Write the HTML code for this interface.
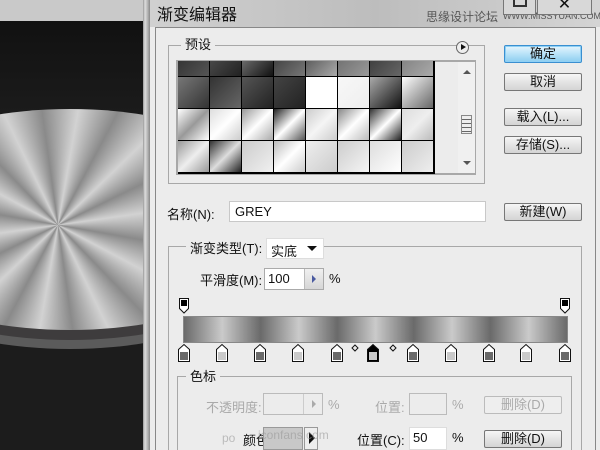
<!DOCTYPE html>
<html><head><meta charset="utf-8"><style>
*{margin:0;padding:0;box-sizing:border-box}
html{width:600px;height:450px;overflow:hidden}
body{width:600px;height:450px;overflow:hidden;position:relative;background:#ececec;font-family:"Liberation Sans","Noto Sans CJK SC",sans-serif;font-size:13px;color:#111}
.a{position:absolute}
.btn{position:absolute;width:78px;height:18px;border:1px solid #777;border-radius:2px;background:linear-gradient(#f6f6f6,#e4e4e4 50%,#d4d4d4);text-align:center;font-size:13px;line-height:16px;color:#111}
.fs{position:absolute;border:1px solid #a8a8a8}
.lg{position:absolute;background:#ececec;padding:0 4px;line-height:16px}
.cell{position:absolute;width:31px;height:31px}
.inp{position:absolute;background:#fff;border:1px solid #c8c8c8}
</style></head><body>
<div class="a" style="left:0;top:0;width:143px;height:450px;background:#1c1c1c;overflow:hidden">
 <div class="a" style="left:0;top:0;width:143px;height:21px;background:#c9c9c9"></div>
 <div class="a" style="left:0;top:21px;width:143px;height:100px;background:linear-gradient(#111,#1c1c1c)"></div>
 <div class="a" style="left:-160px;top:129px;width:460px;height:220px;border-radius:50%;background:#5b5b5b"></div>
 <div class="a" style="left:-160px;top:118px;width:460px;height:222px;border-radius:50%;background:#3e3c3d"></div>
 <div class="a" style="left:-160px;top:109px;width:460px;height:221px;border-radius:50%;background:repeating-conic-gradient(from 10deg at 218px 116px,#d2d2d2 0deg,#8a8a8a 18deg,#d2d2d2 36deg)"></div>
</div>
<div class="a" style="left:143px;top:0;width:7px;height:450px;background:linear-gradient(90deg,#999,#ddd 30%,#bbb 60%,#888)"></div>
<div class="a" style="left:150px;top:0;width:450px;height:27px;background:linear-gradient(90deg,#d0d0d0,#bdbdbd 50%,#d4d4d4)"></div>
<div class="a" style="left:157px;top:1px;font-size:16px;color:#111">渐变编辑器</div>
<div class="a" style="left:426px;top:8px;font-size:12px;color:#555">思缘设计论坛</div>
<div class="a" style="left:503px;top:11px;font-size:9px;color:#555">WWW.MISSYUAN.COM</div>
<div class="a" style="left:503px;top:0;width:33px;height:15px;border:1px solid #777;border-top:0;background:#d8d8d8"></div>
<div class="a" style="left:537px;top:0;width:55px;height:15px;border:1px solid #777;border-top:0;background:#d8d8d8;text-align:center;font-size:16px;line-height:10px">✕</div>
<div class="a" style="left:513px;top:0;width:14px;height:7px;border:2px solid #333;border-top:0"></div>
<div class="a" style="left:155px;top:27px;width:441px;height:423px;background:#ececec;border:1px solid #888;border-bottom:0"></div>
<div class="fs" style="left:168px;top:45px;width:317px;height:139px"></div>
<div class="lg" style="left:181px;top:37px">预设</div>
<div class="a" style="left:456px;top:41px;width:13px;height:13px;border-radius:50%;background:#eee;border:1px solid #666"></div>
<div class="a" style="left:461px;top:44px;width:0;height:0;border-left:5px solid #111;border-top:3.5px solid transparent;border-bottom:3.5px solid transparent"></div>
<div class="a" style="left:176px;top:60px;width:300px;height:115px;border:2px solid #a8a8a8;background:#ececec"></div>
<div class="a" style="left:458px;top:62px;width:17px;height:111px;background:#f0f0f0"></div>
<div class="a" style="left:463px;top:70px;border-left:4px solid transparent;border-right:4px solid transparent;border-bottom:4px solid #555"></div>
<div class="a" style="left:463px;top:161px;border-left:4px solid transparent;border-right:4px solid transparent;border-top:4px solid #555"></div>
<div class="a" style="left:461px;top:115px;width:11px;height:19px;border:1px solid #888;background:repeating-linear-gradient(#eee 0 3px,#666 3px 4px)"></div>
<div class="a" style="left:178px;top:61px;width:257px;height:113px;background:#000;overflow:hidden" id="g"></div>
<div class="btn" style="left:504px;top:45px;border-color:#3a8fd0;background:linear-gradient(#e6f5fd,#b8e2f8 50%,#8ccdf0);box-shadow:0 0 0 1px #8fd0f5 inset">确定</div>
<div class="btn" style="left:504px;top:73px">取消</div>
<div class="btn" style="left:504px;top:108px">载入(L)...</div>
<div class="btn" style="left:504px;top:136px">存储(S)...</div>
<div class="btn" style="left:504px;top:203px">新建(W)</div>
<div class="a" style="left:167px;top:204px">名称(N):</div>
<div class="inp" style="left:229px;top:201px;width:257px;height:21px"></div>
<div class="a" style="left:235px;top:204px">GREY</div>
<div class="fs" style="left:168px;top:246px;width:414px;height:204px;border-bottom:0"></div>
<div class="lg" style="left:186px;top:241px">渐变类型(T):</div>
<div class="inp" style="left:266px;top:238px;width:58px;height:21px;border-color:#ddd"></div>
<div class="a" style="left:271px;top:241px">实底</div>
<div class="a" style="left:307px;top:246px;border-left:5px solid transparent;border-right:5px solid transparent;border-top:5px solid #111"></div>
<div class="a" style="left:200px;top:270px">平滑度(M):</div>
<div class="inp" style="left:264px;top:268px;width:60px;height:22px;border-color:#aaa"></div>
<div class="a" style="left:304px;top:269px;width:19px;height:20px;background:linear-gradient(#f0f0f0,#d6d6d6);border-left:1px solid #bbb"></div>
<div class="a" style="left:312px;top:275px;border-left:4px solid #4a5aa0;border-top:4px solid transparent;border-bottom:4px solid transparent"></div>
<div class="a" style="left:268px;top:271px">100</div>
<div class="a" style="left:329px;top:271px">%</div>
<svg class="a" style="left:0;top:0" width="600" height="450">
 <g fill="#fff" stroke="#111" stroke-width="1">
  <path d="M179.5 298.5h9v10l-4.5 4.5-4.5-4.5z"/><path d="M560.5 298.5h9v10l-4.5 4.5-4.5-4.5z"/>
 </g>
 <rect x="181" y="300" width="6" height="6" fill="#000"/><rect x="562" y="300" width="6" height="6" fill="#000"/>
 <g stroke="#111" fill="none"><path d="M355 345l3 3-3 3-3-3z"/><path d="M393 345l3 3-3 3-3-3z"/></g>
</svg>
<div class="a" style="left:183px;top:316px;width:385px;height:27px;border:1px solid #888;background:linear-gradient(90deg,#6a6a6a 0%,#cacaca 10%,#6a6a6a 20%,#cacaca 30%,#6a6a6a 40%,#cacaca 50%,#6a6a6a 60%,#cacaca 70%,#6a6a6a 80%,#cacaca 90%,#6a6a6a 100%)"></div>
<svg class="a" style="left:0;top:0" width="600" height="450" id="bs"></svg>
<div class="fs" style="left:177px;top:376px;width:395px;height:74px;border-bottom:0"></div>
<div class="lg" style="left:186px;top:369px">色标</div>
<div class="a" style="left:206px;top:397px;color:#aaa">不透明度:</div>
<div class="inp" style="left:263px;top:393px;width:60px;height:22px;border-color:#bbb;background:#ececec"></div>
<div class="a" style="left:303px;top:394px;width:20px;height:20px;border-left:1px solid #ccc"></div>
<div class="a" style="left:312px;top:400px;border-left:4px solid #aaa;border-top:4px solid transparent;border-bottom:4px solid transparent"></div>
<div class="a" style="left:328px;top:397px;color:#aaa">%</div>
<div class="a" style="left:375px;top:397px;color:#aaa">位置:</div>
<div class="inp" style="left:409px;top:393px;width:38px;height:22px;border-color:#bbb;background:#ececec"></div>
<div class="a" style="left:452px;top:397px;color:#aaa">%</div>
<div class="btn" style="left:484px;top:396px;color:#aaa;border-color:#bbb;background:#eee">删除(D)</div>
<div class="a" style="left:222px;top:431px;color:#bbb;font-size:12px">po</div>
<div class="a" style="left:243px;top:430px">颜色:</div>
<div class="a" style="left:263px;top:427px;width:40px;height:23px;background:#c8c8c8;border:1px solid #999"></div>
<div class="a" style="left:304px;top:427px;width:14px;height:23px;border:1px solid #999;background:#eee"></div>
<div class="a" style="left:309px;top:432px;border-left:6px solid #111;border-top:6px solid transparent;border-bottom:6px solid transparent"></div>
<div class="a" style="left:258px;top:428px;color:#999;font-size:12px;opacity:.6">iconfans.com</div>
<div class="a" style="left:357px;top:430px">位置(C):</div>
<div class="inp" style="left:409px;top:427px;width:38px;height:23px;border-color:#ddd"></div>
<div class="a" style="left:413px;top:430px">50</div>
<div class="a" style="left:452px;top:430px">%</div>
<div class="btn" style="left:484px;top:430px">删除(D)</div>
<script>
var g=document.getElementById('g'),h='';
var rows=[
['#2a2a2a,#555','#555,#222','#888,#111','#333,#777','#444,#aaa','#666,#999','#333,#666','#777,#aaa'],
['#777,#333','#333,#666','#555,#222','#444,#222','#fff,#fff','#f8f8f8,#eee','#aaa,#111','#fff,#666'],
['#fff,#999,#fff','#ddd,#fff,#ccc','#999,#fff,#aaa','#222,#fff,#555','#ccc,#f5f5f5,#ccc','#888,#fff,#bbb','#333,#fff,#222','#ddd,#eee,#bbb'],
['#999,#eee,#999','#333,#ddd,#222','#ccc,#f0f0f0','#bbb,#fff,#ccc','#eee,#ccc','#ccc,#f5f5f5','#ddd,#fff','#ccc,#eee']];
var ys=[-16,16,48,80];
for(var r=0;r<4;r++)for(var c=0;c<8;c++){h+='<div class="cell" style="left:'+(c*32)+'px;top:'+ys[r]+'px;background:linear-gradient(135deg,'+rows[r][c]+')"></div>';}
g.innerHTML=h;
var xs=[184,222,260,298,337,373,413,451,489,526,565],s='';
for(var i=0;i<11;i++){var x=xs[i]-5.5,f=(i%2==0)?'#6a6a6a':'#cacaca';
s+='<path d="M'+x+' 361.5V349.5L'+(x+5.5)+' 344.5L'+(x+11)+' 349.5V361.5Z" fill="'+(i==5?'#000':'#fff')+'" stroke="#111"/>';
s+='<rect x="'+(x+1.5)+'" y="352" width="8" height="8" fill="'+f+'"/>';}
document.getElementById('bs').innerHTML=s;
</script>
</body></html>
